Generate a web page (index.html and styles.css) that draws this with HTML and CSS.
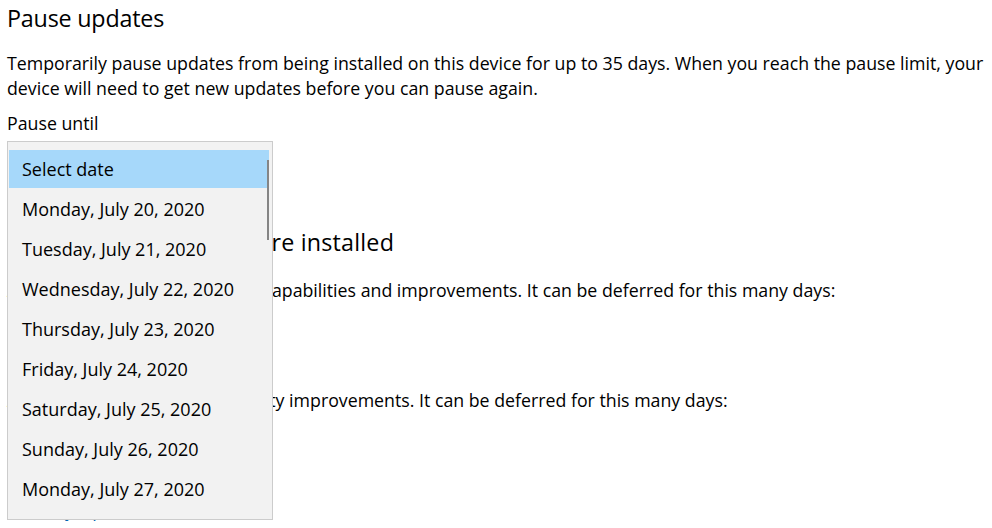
FILE: index.html
```html
<!DOCTYPE html>
<html lang="en">
<head>
<meta charset="utf-8">
<title>Pause updates</title>
<link rel="stylesheet" href="styles.css">
</head>
<body>
<main class="page">
  <section class="group">
    <h2 class="title">Pause updates</h2>
    <p class="desc">Temporarily pause updates from being installed on this device for up to 35 days. When you reach the pause limit, your device will need to get new updates before you can pause again.</p>
    <div class="label">Pause until</div>
    <div class="combo-wrap">
      <div class="combo">Select date</div>
      <div class="dropdown">
        <div class="option selected">Select date</div>
        <div class="option">Monday, July 20, 2020</div>
        <div class="option">Tuesday, July 21, 2020</div>
        <div class="option">Wednesday, July 22, 2020</div>
        <div class="option">Thursday, July 23, 2020</div>
        <div class="option">Friday, July 24, 2020</div>
        <div class="option">Saturday, July 25, 2020</div>
        <div class="option">Sunday, July 26, 2020</div>
        <div class="option">Monday, July 27, 2020</div>
        <div class="scrollbar"></div>
      </div>
    </div>
  </section>
  <section class="group second">
    <h2 class="title title-second">Choose when updates are installed</h2>
    <p class="desc">A feature update includes new capabilities and improvements. It can be deferred for this many days:</p>
    <div class="combo">0</div>
    <p class="desc">A quality update includes security improvements. It can be deferred for this many days:</p>
    <div class="combo">0</div>
    <a class="link" href="#">Delivery Optimization</a>
  </section>
</main>
</body>
</html>
```
FILE: styles.css
```css
html, body {
  margin: 0;
  padding: 0;
  background: #ffffff;
  overflow: hidden;
}
body {
  font-family: "Open Sans", "Noto Sans", sans-serif;
  color: #000000;
  font-size: 17.75px;
}
.page {
  padding: 0 7px;
  width: 992px;
  box-sizing: border-box;
}
.title {
  margin: 0;
  font-size: 23.3px;
  font-weight: 400;
  line-height: 36px;
  letter-spacing: -0.2px;
}
.title-second {
  letter-spacing: 0.2px;
}
.desc {
  margin: 15px 0 0;
  line-height: 25px;
}
.label {
  margin-top: 10px;
  line-height: 25px;
}
.combo-wrap {
  position: relative;
}
.combo {
  width: 264px;
  height: 32px;
  border: 1px solid #999;
  box-sizing: border-box;
  margin-top: 6px;
  line-height: 30px;
  padding-left: 10px;
}
.dropdown {
  position: absolute;
  left: 0;
  top: -1px;
  width: 266px;
  height: 379px;
  box-sizing: border-box;
  border: 1px solid #cccccc;
  background: #f2f2f2;
  padding: 8px 3px 0 1px;
  font-size: 18px;
}
.option {
  height: 40px;
  line-height: 38px;
  padding-left: 13px;
  color: #000;
  white-space: nowrap;
}
.option.selected {
  background: #a6d8fa;
  height: 38px;
  margin-bottom: 2px;
}
.scrollbar {
  position: absolute;
  right: 3px;
  top: 18px;
  width: 2px;
  height: 80px;
  background: #858585;
}
.second {
  margin-top: 50px;
}
.second .desc {
  margin-top: 18px;
}
.second .combo {
  margin-top: 14px;
  margin-bottom: 39px;
}
.link {
  display: inline-block;
  margin-top: -1px;
  color: #0063b1;
  text-decoration: none;
}
```
